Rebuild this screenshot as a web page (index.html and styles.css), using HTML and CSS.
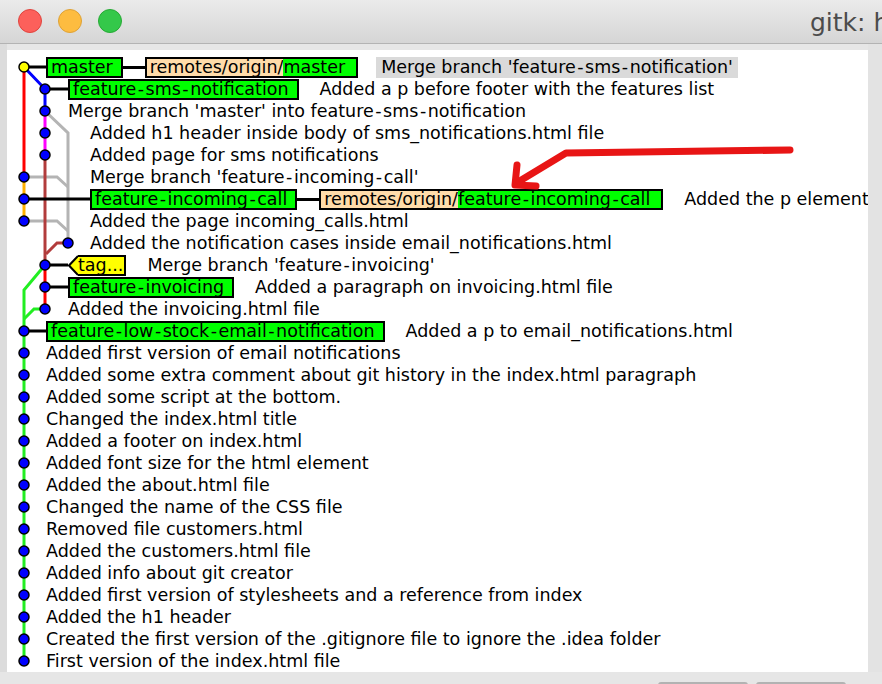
FILE: index.html
```html
<!DOCTYPE html>
<html>
<head>
<meta charset="utf-8">
<link rel="stylesheet" href="styles.css">
</head>
<body>
<div class="window">
  <div class="titlebar">
    <div class="lights">
      <span class="light red"></span>
      <span class="light yellow"></span>
      <span class="light green"></span>
    </div>
    <div class="title">gitk: h</div>
  </div>
  <div class="main">
    <div class="edge-left"></div>
    <div class="pane">
      <svg class="graph" width="120" height="622" viewBox="7 50 120 622">
        <g fill="none" stroke-width="3" stroke-linejoin="miter">
          <path d="M24 67 V177" stroke="#ff0000"/>
          <path d="M24 177 V221" stroke="#ffb000"/>
          <path d="M24 67 L45 89 V111" stroke="#0000ff"/>
          <path d="M45 111 V155" stroke="#ff00ff"/>
          <path d="M45 111 L68 133 V243" stroke="#b4b4b4"/>
          <path d="M24 177 H57 L68 187" stroke="#b4b4b4"/>
          <path d="M24 221 H57 L68 231" stroke="#b4b4b4"/>
          <path d="M45 155 V265" stroke="#b23c3c"/>
          <path d="M68 243 H57 L46 254" stroke="#b23c3c"/>
          <path d="M45 265 V309" stroke="#ff0000"/>
          <path d="M45 265 L24 290 V661" stroke="#22ee22"/>
          <path d="M45 309 H34 L24 319" stroke="#22ee22"/>
          <path d="M24 67 H46 M45 89 H68 M24 199 H90 M45 265 H68 M45 287 H68 M24 331 H47" stroke="#000"/>
        </g>
        <g fill="#0000ff" stroke="#000" stroke-width="1.5">
          <circle cx="24" cy="67" r="5" fill="#ffff00"/>
          <circle cx="45" cy="89" r="5"/>
          <circle cx="45" cy="111" r="5"/>
          <circle cx="45" cy="133" r="5"/>
          <circle cx="45" cy="155" r="5"/>
          <circle cx="24" cy="177" r="5"/>
          <circle cx="24" cy="199" r="5"/>
          <circle cx="24" cy="221" r="5"/>
          <circle cx="68" cy="243" r="5"/>
          <circle cx="45" cy="265" r="5"/>
          <circle cx="45" cy="287" r="5"/>
          <circle cx="45" cy="309" r="5"/>
          <circle cx="24" cy="331" r="5"/>
          <circle cx="24" cy="353" r="5"/>
          <circle cx="24" cy="375" r="5"/>
          <circle cx="24" cy="397" r="5"/>
          <circle cx="24" cy="419" r="5"/>
          <circle cx="24" cy="441" r="5"/>
          <circle cx="24" cy="463" r="5"/>
          <circle cx="24" cy="485" r="5"/>
          <circle cx="24" cy="507" r="5"/>
          <circle cx="24" cy="529" r="5"/>
          <circle cx="24" cy="551" r="5"/>
          <circle cx="24" cy="573" r="5"/>
          <circle cx="24" cy="595" r="5"/>
          <circle cx="24" cy="617" r="5"/>
          <circle cx="24" cy="639" r="5"/>
          <circle cx="24" cy="661" r="5"/>
        </g>
      </svg>
      <div class="rows">
        <div class="row ind-a"><span class="ref">master</span><span class="link"></span><span class="ref remote"><span class="rp">remotes/origin/</span><span class="lp">master</span></span><span class="msg selected">Merge branch 'feature<span class="hy">-</span>sms<span class="hy">-</span>notification'</span></div>
        <div class="row ind-b"><span class="ref">feature<span class="hy">-</span>sms<span class="hy">-</span>notification</span><span class="msg">Added a p before footer with the features list</span></div>
        <div class="row ind-b"><span class="text">Merge branch 'master' into feature<span class="hy">-</span>sms<span class="hy">-</span>notification</span></div>
        <div class="row ind-c"><span class="text">Added h1 header inside body of sms_notifications.html file</span></div>
        <div class="row ind-c"><span class="text">Added page for sms notifications</span></div>
        <div class="row ind-c"><span class="text">Merge branch 'feature<span class="hy">-</span>incoming<span class="hy">-</span>call'</span></div>
        <div class="row ind-c"><span class="ref">feature<span class="hy">-</span>incoming<span class="hy">-</span>call</span><span class="link"></span><span class="ref remote"><span class="rp">remotes/origin/</span><span class="lp">feature<span class="hy">-</span>incoming<span class="hy">-</span>call</span></span><span class="msg">Added the p element</span></div>
        <div class="row ind-c"><span class="text">Added the page incoming_calls.html</span></div>
        <div class="row ind-c"><span class="text">Added the notification cases inside email_notifications.html</span></div>
        <div class="row ind-b"><span class="tag"><svg class="tag-tip" width="10" height="21" viewBox="0 0 10 21"><polygon points="10,1 1,10.5 10,20" fill="#ffff00"/><polyline points="10,1 1,10.5 10,20" fill="none" stroke="#000" stroke-width="2"/></svg><span class="tag-body">tag...</span></span><span class="msg">Merge branch 'feature<span class="hy">-</span>invoicing'</span></div>
        <div class="row ind-b"><span class="ref">feature<span class="hy">-</span>invoicing</span><span class="msg">Added a paragraph on invoicing.html file</span></div>
        <div class="row ind-b"><span class="text">Added the invoicing.html file</span></div>
        <div class="row ind-a"><span class="ref">feature<span class="hy">-</span>low<span class="hy">-</span>stock<span class="hy">-</span>email<span class="hy">-</span>notification</span><span class="msg">Added a p to email_notifications.html</span></div>
        <div class="row ind-a"><span class="text">Added first version of email notifications</span></div>
        <div class="row ind-a"><span class="text">Added some extra comment about git history in the index.html paragraph</span></div>
        <div class="row ind-a"><span class="text">Added some script at the bottom.</span></div>
        <div class="row ind-a"><span class="text">Changed the index.html title</span></div>
        <div class="row ind-a"><span class="text">Added a footer on index.html</span></div>
        <div class="row ind-a"><span class="text">Added font size for the html element</span></div>
        <div class="row ind-a"><span class="text">Added the about.html file</span></div>
        <div class="row ind-a"><span class="text">Changed the name of the CSS file</span></div>
        <div class="row ind-a"><span class="text">Removed file customers.html</span></div>
        <div class="row ind-a"><span class="text">Added the customers.html file</span></div>
        <div class="row ind-a"><span class="text">Added info about git creator</span></div>
        <div class="row ind-a"><span class="text">Added first version of stylesheets and a reference from index</span></div>
        <div class="row ind-a"><span class="text">Added the h1 header</span></div>
        <div class="row ind-a"><span class="text">Created the first version of the .gitignore file to ignore the .idea folder</span></div>
        <div class="row ind-a"><span class="text">First version of the index.html file</span></div>
      </div>
      <svg class="arrow" width="300" height="60" viewBox="505 138 300 60">
        <g fill="none" stroke="#e81515" stroke-width="7" stroke-linecap="round" stroke-linejoin="round">
          <path d="M790 150 L566 153 L518 182"/>
          <path d="M517 165 L515 185 L536 186"/>
        </g>
      </svg>
    </div>
    <div class="edge-right"></div>
  </div>
  <div class="footer">
    <span class="btn"></span>
    <span class="btn"></span>
  </div>
</div>
</body>
</html>
```

FILE: styles.css
```css
* { box-sizing: border-box; }

html, body {
  margin: 0;
  padding: 0;
}

body {
  width: 882px;
  height: 684px;
  overflow: hidden;
  background: #e6e6e6;
  font-family: "DejaVu Sans", sans-serif;
}

.window {
  width: 882px;
  height: 684px;
  display: flex;
  flex-direction: column;
}

.titlebar {
  height: 44px;
  flex: none;
  display: flex;
  align-items: flex-start;
  background: linear-gradient(#ebebeb, #d5d5d5);
  border-bottom: 1px solid #b3b3b3;
  overflow: hidden;
  white-space: nowrap;
}

.lights {
  display: flex;
  gap: 16px;
  padding: 9px 0 0 18px;
}

.light {
  width: 24px;
  height: 24px;
  border-radius: 50%;
}

.light.red { background: #fc605b; border: 1px solid #e0443e; }
.light.yellow { background: #fdbc40; border: 1px solid #dea236; }
.light.green { background: #34c84a; border: 1px solid #27aa35; }

.title {
  margin-left: 688px;
  padding-top: 8px;
  font-family: "DejaVu Sans", sans-serif;
  font-size: 25px;
  color: #4c4c4c;
  flex: none;
}

.main {
  flex: none;
  height: 628px;
  display: flex;
}

.edge-left {
  width: 7px;
  flex: none;
  background: #dcdcdc;
}

.pane {
  position: relative;
  width: 861px;
  height: 622px;
  margin-top: 6px;
  flex: none;
  background: #ffffff;
  overflow: hidden;
}

.edge-right {
  flex: 1;
  background: #e3e3e3;
}

.graph {
  position: absolute;
  left: 0;
  top: 0;
}

.arrow {
  position: absolute;
  left: 498px;
  top: 88px;
}

.rows {
  position: relative;
  padding-top: 6px;
}

.row {
  height: 22px;
  display: flex;
  align-items: center;
  white-space: nowrap;
  font-size: 17.5px;
  color: #000;
}

.hy {
  padding: 0 1.5px;
}

.ind-a { padding-left: 39px; }
.ind-b { padding-left: 61px; }
.ind-c { padding-left: 83px; }

.ref {
  display: flex;
  align-items: center;
  height: 21px;
  border: 2px solid #000;
  background: #00ff00;
  padding: 0 8px 0 3px;
  flex: none;
}

.ref.remote {
  padding: 0;
}

.rp {
  background: #ffdcaa;
  padding: 0 0 0 3px;
  height: 100%;
  display: flex;
  align-items: center;
}

.lp {
  background: #00ff00;
  padding: 0 11px 0 0;
  height: 100%;
  display: flex;
  align-items: center;
}

.link {
  width: 22px;
  height: 3px;
  background: #000;
  flex: none;
}

.msg {
  margin-left: 21px;
}

.msg.selected {
  margin-left: 18px;
  padding: 0 5px;
  height: 21px;
  line-height: 21px;
  background: #dadada;
}

.tag {
  display: flex;
  align-items: center;
  flex: none;
}

.tag-tip {
  display: block;
}

.tag-body {
  display: flex;
  align-items: center;
  height: 21px;
  background: #ffff00;
  border: 2px solid #000;
  border-left: none;
  padding: 0 1px 0 0;
}

.footer {
  flex: 1;
  position: relative;
  display: flex;
  gap: 8px;
  padding: 10px 0 0 658px;
  background: #e6e6e6;
}

.btn {
  width: 90px;
  height: 4px;
  background: #b2b2b2;
  border-radius: 3px 3px 0 0;
}
```
